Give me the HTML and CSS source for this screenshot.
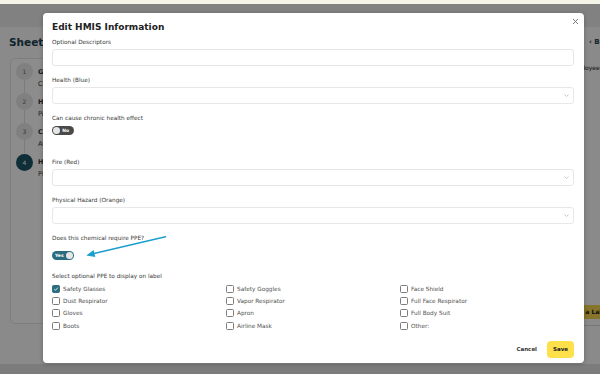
FILE: index.html
```html
<!DOCTYPE html>
<html>
<head>
<meta charset="utf-8">
<title>Edit HMIS Information</title>
<link rel="stylesheet" href="styles.css">
</head>
<body>
<div class="strip"></div>
<div class="app">
  <div class="app-header"></div>
  <div class="app-body">
    <div class="left-col">
      <h1 class="sheet-title">Sheet Information</h1>
      <div class="steps-card">
        <div class="step">
          <span class="step-num">1</span>
          <div class="step-text"><div>General Info</div><div>Chemical Name</div></div>
        </div>
        <div class="step">
          <span class="step-num">2</span>
          <div class="step-text"><div>Hazards</div><div>Pictograms</div></div>
        </div>
        <div class="step">
          <span class="step-num">3</span>
          <div class="step-text"><div>Composition</div><div>Attributes</div></div>
        </div>
        <div class="step last">
          <span class="step-num current">4</span>
          <div class="step-text"><div>HMIS Information</div><div>PPE</div></div>
        </div>
      </div>
    </div>
    <div class="mid-col"></div>
    <div class="right-col">
      <div class="back-link">‹ Back</div>
      <div class="emp">Employee</div>
      <div class="grow"></div>
      <div class="label-btn">Add a Label</div>
      <div class="right-rule"></div>
    </div>
  </div>
  <div class="app-footer"></div>
  <div class="overlay"></div>
</div>

<div class="modal">
  <button class="close" aria-label="Close">
    <svg width="7" height="7" viewBox="0 0 7 7"><path d="M1 1L6 6M6 1L1 6" stroke="#6b6b6b" stroke-width="0.9" fill="none"/></svg>
  </button>
  <h2 class="modal-title">Edit HMIS Information</h2>

  <div class="field">
    <div class="field-label">Optional Descriptors</div>
    <div class="input"></div>
  </div>

  <div class="field">
    <div class="field-label">Health (Blue)</div>
    <div class="input select"><svg class="chev" width="5" height="3" viewBox="0 0 5 3"><path d="M0.5 0.5L2.5 2.5L4.5 0.5" stroke="#b5b5b5" stroke-width="0.7" fill="none"/></svg></div>
  </div>

  <div class="field field-toggle-1">
    <div class="field-label">Can cause chronic health effect</div>
    <div class="toggle off"><span class="knob"></span><span class="toggle-text">No</span></div>
  </div>

  <div class="field">
    <div class="field-label">Fire (Red)</div>
    <div class="input select"><svg class="chev" width="5" height="3" viewBox="0 0 5 3"><path d="M0.5 0.5L2.5 2.5L4.5 0.5" stroke="#b5b5b5" stroke-width="0.7" fill="none"/></svg></div>
  </div>

  <div class="field">
    <div class="field-label">Physical Hazard (Orange)</div>
    <div class="input select"><svg class="chev" width="5" height="3" viewBox="0 0 5 3"><path d="M0.5 0.5L2.5 2.5L4.5 0.5" stroke="#b5b5b5" stroke-width="0.7" fill="none"/></svg></div>
  </div>

  <div class="field field-toggle-2">
    <div class="field-label label-ppe">Does this chemical require PPE?</div>
    <div class="toggle on"><span class="toggle-text">Yes</span><span class="knob"></span></div>
  </div>

  <div class="field">
    <div class="field-label">Select optional PPE to display on label</div>
    <div class="ppe-grid">
      <label class="cb-row"><span class="cb checked"><svg width="6" height="6" viewBox="0 0 6 6"><path d="M1.2 3.1L2.5 4.3L4.9 1.6" stroke="#fff" stroke-width="0.8" fill="none"/></svg></span>Safety Glasses</label>
      <label class="cb-row"><span class="cb"></span>Safety Goggles</label>
      <label class="cb-row"><span class="cb"></span>Face Shield</label>
      <label class="cb-row"><span class="cb"></span>Dust Respirator</label>
      <label class="cb-row"><span class="cb"></span>Vapor Respirator</label>
      <label class="cb-row"><span class="cb"></span>Full Face Respirator</label>
      <label class="cb-row"><span class="cb"></span>Gloves</label>
      <label class="cb-row"><span class="cb"></span>Apron</label>
      <label class="cb-row"><span class="cb"></span>Full Body Suit</label>
      <label class="cb-row"><span class="cb"></span>Boots</label>
      <label class="cb-row"><span class="cb"></span>Airline Mask</label>
      <label class="cb-row"><span class="cb"></span>Other:</label>
    </div>
  </div>

  <div class="modal-footer">
    <button class="btn-cancel">Cancel</button>
    <button class="btn-save">Save</button>
  </div>
</div>

<svg class="annot" width="600" height="374" viewBox="0 0 600 374">
  <path d="M165.5 236.8L94 253.5" stroke="#1b9fcf" stroke-width="1.5" fill="none" stroke-linecap="round"/>
  <polygon points="86.3,255.4 93.6,249.9 95.3,257.0" fill="#1b9fcf"/>
</svg>
</body>
</html>
```

FILE: styles.css
```css
html, body {
  margin: 0;
  padding: 0;
}
body {
  width: 600px;
  height: 374px;
  overflow: hidden;
  position: relative;
  font-family: "DejaVu Sans", Verdana, sans-serif;
  background: #fff;
}

.strip {
  height: 4px;
  background: #f3f3e7;
}

.app {
  position: relative;
  height: 370px;
  display: flex;
  flex-direction: column;
  background: #fbfbfb;
}
.app-header {
  height: 23px;
  flex: none;
  background: #ececec;
}
.app-footer {
  height: 10px;
  flex: none;
  background: #e2e2e2;
}
.app-body {
  flex: 1;
  display: flex;
  min-height: 0;
}
.left-col {
  width: 44px;
  flex: none;
  overflow: hidden;
  padding: 0 0 0 9px;
  box-sizing: border-box;
  display: flex;
  flex-direction: column;
}
.mid-col {
  flex: 1;
}
.sheet-title {
  margin: 7px 0 0;
  font-size: 10.5px;
  line-height: 16px;
  font-weight: bold;
  color: #1c4150;
  white-space: nowrap;
}
.steps-card {
  margin-top: 8px;
  margin-left: 1px;
  width: 200px;
  height: 266px;
  box-sizing: border-box;
  border: 1px solid #e6e6e6;
  border-radius: 5px;
  background: #ffffff;
  padding: 4px 0 0 5px;
  display: flex;
  flex-direction: column;
  gap: 3.7px;
}
.step {
  display: flex;
  gap: 5px;
  align-items: flex-start;
  position: relative;
}
.step::before {
  content: "";
  position: absolute;
  left: 8px;
  top: 17px;
  width: 1px;
  height: 13px;
  background: #e2e2e2;
}
.step.last::before {
  display: none;
}
.step-num {
  width: 17px;
  height: 17px;
  border-radius: 50%;
  background: #e9e9e9;
  color: #666;
  font-size: 6px;
  display: flex;
  align-items: center;
  justify-content: center;
  flex: none;
}
.step-num.current {
  background: #1c5567;
  color: #fff;
}
.step-text {
  font-size: 6.5px;
  line-height: 12px;
  color: #333;
  padding-top: 2.5px;
  white-space: nowrap;
}
.step-text div:first-child {
  font-weight: bold;
}

.right-col {
  width: 30px;
  flex: none;
  overflow: hidden;
  display: flex;
  flex-direction: column;
}
.back-link {
  margin: 10px 0 0 19px;
  font-size: 7px;
  line-height: 10px;
  color: #1c4150;
  font-weight: bold;
  white-space: nowrap;
}
.emp {
  margin: 17px 0 0 0;
  font-size: 6px;
  line-height: 8px;
  color: #222;
  white-space: nowrap;
}
.grow {
  flex: 1;
}
.label-btn {
  margin: 0 0 6px 0;
  height: 14px;
  line-height: 14px;
  background: #f2d44c;
  color: #111;
  font-size: 6px;
  font-weight: bold;
  white-space: nowrap;
}
.right-rule {
  height: 1px;
  background: #d8d8d8;
  margin-bottom: 38px;
}

.overlay {
  position: absolute;
  inset: 0;
  background: rgba(0, 0, 0, 0.45);
}

/* Modal */
.modal {
  position: absolute;
  left: 43px;
  top: 13px;
  width: 541px;
  height: 350px;
  box-sizing: border-box;
  padding: 8px 10px 7px 9px;
  background: #fff;
  border-radius: 4px;
  display: flex;
  flex-direction: column;
  box-shadow: 0 1px 4px rgba(0,0,0,0.25);
}
.close {
  position: absolute;
  right: 5px;
  top: 5px;
  width: 7px;
  height: 7px;
  padding: 0;
  border: 0;
  background: none;
  display: flex;
}
.modal-title {
  margin: 0 0 4px;
  font-size: 9px;
  line-height: 12px;
  font-weight: bold;
  color: #222;
}
.field {
  display: flex;
  flex-direction: column;
  align-items: stretch;
  margin-bottom: 9px;
}
.field-label {
  font-size: 5.75px;
  line-height: 10px;
  color: #383838;
  margin-bottom: 2px;
  white-space: nowrap;
}
.input {
  height: 17px;
  box-sizing: border-box;
  border: 1px solid #e7e7e7;
  border-radius: 3px;
  display: flex;
  align-items: center;
  justify-content: flex-end;
  padding-right: 4px;
}
.chev {
  display: block;
}
.field-toggle-1 {
  margin-bottom: 22px;
}
.field-toggle-1 .field-label {
  margin-bottom: 3px;
}
.field-toggle-2 {
  margin-bottom: 11px;
}
.label-ppe {
  margin-bottom: 8px;
}
.toggle {
  width: 22px;
  height: 9px;
  box-sizing: border-box;
  border-radius: 5px;
  padding: 0 1px;
  display: flex;
  align-items: center;
  justify-content: space-between;
  font-size: 4.5px;
  font-weight: bold;
  color: #fff;
}
.toggle.off {
  background: #4a4a4a;
}
.toggle.on {
  background: #2b6b7f;
  padding-left: 3px;
}
.toggle.off .toggle-text {
  margin-right: 4px;
}
.knob {
  width: 7px;
  height: 7px;
  border-radius: 50%;
  background: #e6e6e6;
}

.ppe-grid {
  display: grid;
  grid-template-columns: repeat(3, 1fr);
  grid-auto-rows: 12.2px;
}
.cb-row {
  display: flex;
  align-items: center;
  gap: 3px;
  font-size: 5.75px;
  color: #505050;
  white-space: nowrap;
}
.cb {
  width: 8px;
  height: 8px;
  box-sizing: border-box;
  border: 1px solid #7c7c7c;
  border-radius: 1.5px;
  display: flex;
  align-items: center;
  justify-content: center;
  flex: none;
}
.cb.checked {
  background: #2e6c80;
  border-color: #2e6c80;
}

.modal-footer {
  margin-top: auto;
  display: flex;
  justify-content: flex-end;
  align-items: center;
  gap: 10px;
}
.btn-cancel, .btn-save {
  font-family: "DejaVu Sans", Verdana, sans-serif;
  font-size: 5.5px;
  font-weight: bold;
  color: #333;
  border: 0;
  background: none;
  padding: 0;
}
.btn-save {
  width: 27px;
  height: 17px;
  background: #fde04a;
  color: #222;
  border-radius: 4px;
}

.annot {
  position: absolute;
  left: 0;
  top: 0;
  pointer-events: none;
}
```
